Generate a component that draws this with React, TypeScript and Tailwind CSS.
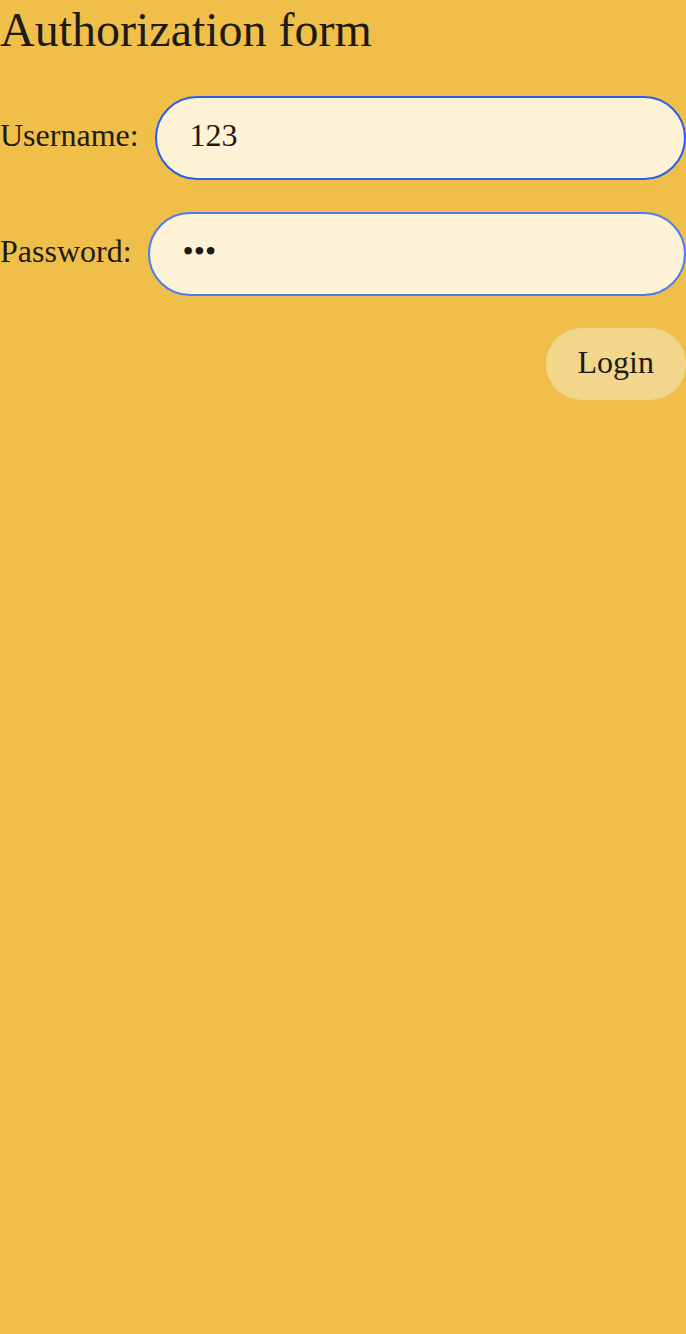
import React from "react";

export default function App() {
  return (
    <div
      className="min-h-[1334px] w-full bg-[#f0bf4a] text-[#1e1a14]"
      style={{ fontFamily: '"Liberation Serif", "Times New Roman", serif' }}
    >
      <h1 className="m-0 pt-[2px] text-[48px] leading-[55px] font-normal">Authorization form</h1>
      <form className="mt-[39px] flex flex-col gap-[32px]" onSubmit={(e) => e.preventDefault()}>
        <div className="flex items-center gap-[16px]">
          <label className="pb-[6px] text-[32px] leading-[37px] whitespace-nowrap">Username:</label>
          <input
            type="text"
            defaultValue="123"
            className="h-[84px] min-w-0 flex-1 rounded-full border-2 border-[#2a5ee8] bg-[#fdf2d6] px-[33px] pb-[6px] text-[32px] text-[#1e1a14] outline-none"
            style={{ fontFamily: '"Liberation Serif", "Times New Roman", serif' }}
          />
        </div>
        <div className="flex items-center gap-[16px]">
          <label className="pb-[6px] text-[32px] leading-[37px] whitespace-nowrap">Password:</label>
          <input
            type="password"
            defaultValue="123"
            className="h-[84px] min-w-0 flex-1 rounded-full border-2 border-[#4b7cf0] bg-[#fdf2d6] px-[33px] pb-[6px] text-[32px] text-[#1e1a14] outline-none"
            style={{ fontFamily: '"Liberation Serif", "Times New Roman", serif' }}
          />
        </div>
        <div className="flex justify-end">
          <button
            type="submit"
            className="h-[72px] rounded-full bg-[#f2d68c] px-[32px] pb-[3px] text-[32px] leading-[37px] text-[#1e1a14]"
            style={{ fontFamily: '"Liberation Serif", "Times New Roman", serif' }}
          >
            Login
          </button>
        </div>
      </form>
    </div>
  );
}
